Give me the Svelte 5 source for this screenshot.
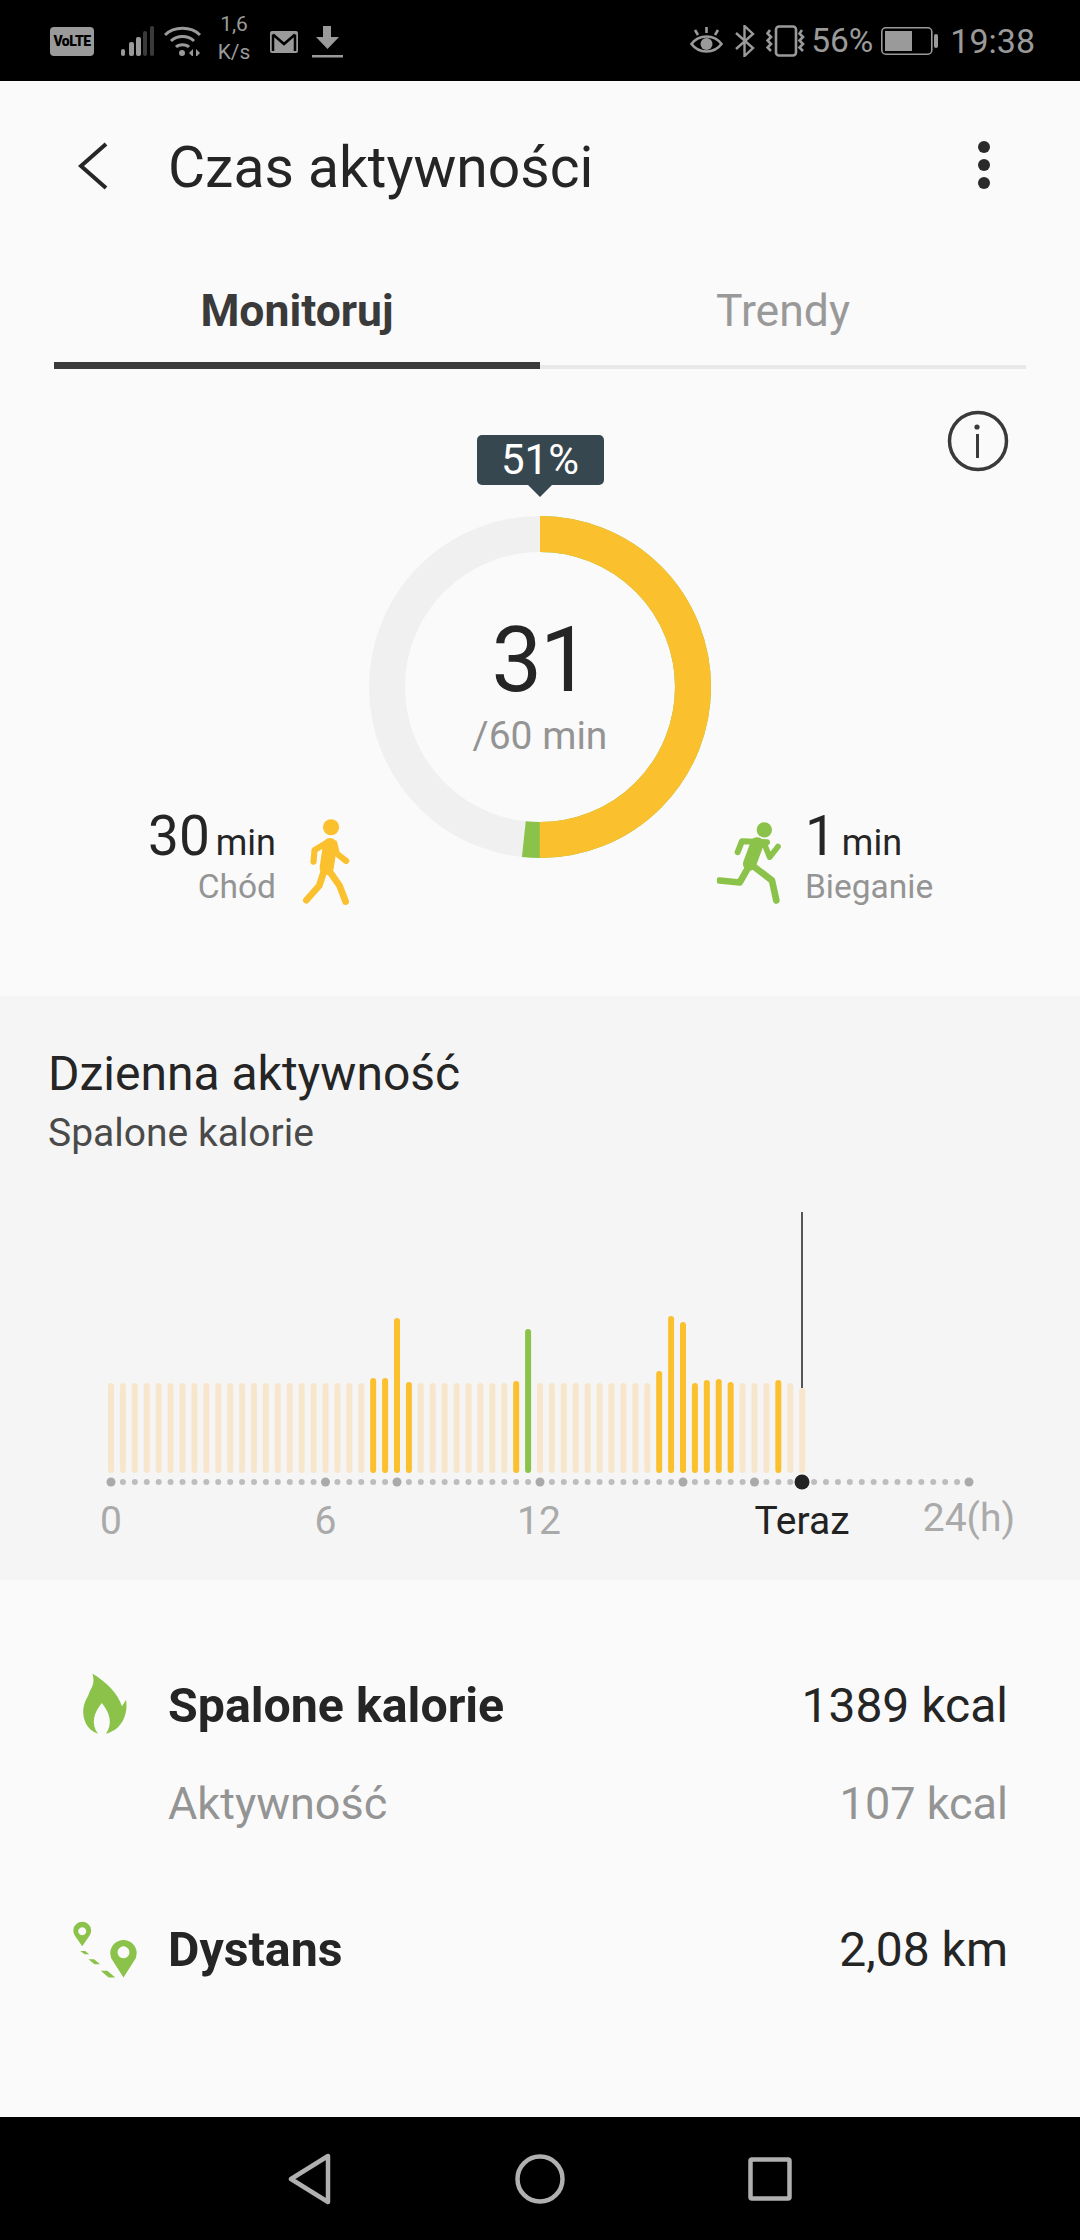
<script lang="ts">
	const activeBars: Record<number, { top: number; color?: string }> = {
		22: { top: 1378 },
		23: { top: 1378 },
		24: { top: 1318 },
		25: { top: 1382 },
		34: { top: 1381 },
		35: { top: 1329, color: '#8bc34a' },
		46: { top: 1371 },
		47: { top: 1316 },
		48: { top: 1322 },
		49: { top: 1383 },
		50: { top: 1380 },
		51: { top: 1379 },
		52: { top: 1382 },
		56: { top: 1380 }
	};

	const step = 858 / 72;
	const baseY = 1473;

	const bars = Array.from({ length: 59 }, (_, i) => {
		const active = activeBars[i];
		const top = active ? active.top : i === 58 ? 1388 : 1383;
		return {
			x: 111 + i * step,
			top,
			height: baseY - top,
			color: active ? active.color ?? '#fbc02d' : '#f8e6cc'
		};
	});

	const dots = Array.from({ length: 73 }, (_, i) => ({
		x: 111 + i * step,
		big: i % 24 === 0 || i % 18 === 0
	}));

	const ticks = [
		{ x: 111, label: '0' },
		{ x: 325.5, label: '6' },
		{ x: 539, label: '12' }
	];

	// ring: radius 153, yellow half plus 6 degrees of green
	const circumference = 2 * Math.PI * 153;
</script>

<div class="phone">
	<div class="status">
		<div class="status-left">
			<span class="volte">VoLTE</span>
			<svg class="signal" width="33" height="30" viewBox="0 0 33 30">
				<rect x="0" y="23" width="4" height="7" rx="2" fill="#9a9a9a" />
				<rect x="8" y="16" width="5" height="14" rx="2" fill="#9a9a9a" />
				<rect x="15" y="11" width="5" height="19" rx="2" fill="#9a9a9a" />
				<rect x="22" y="5" width="4" height="25" rx="2" fill="#3a3a3a" />
				<rect x="29" y="0" width="4" height="30" rx="2" fill="#3a3a3a" />
			</svg>
			<svg class="wifi" width="37" height="30" viewBox="0 0 37 30" fill="none" stroke="#9a9a9a" stroke-width="3">
				<path d="M1 9C10 0 27 0 36 9" />
				<path d="M7 15C13 9 24 9 30 15" />
				<path d="M12 21C15 18 22 18 25 21" />
				<circle cx="18" cy="27" r="3" fill="#9a9a9a" stroke="none" />
				<path d="M29 23l-4 4 4 4zM32 23l4 4-4 4z" fill="#9a9a9a" stroke="none" />
			</svg>
			<div class="speed">
				<span>1,6</span>
				<span>K/s</span>
			</div>
			<svg class="gmail" width="28" height="22" viewBox="0 0 28 22">
				<rect width="28" height="22" rx="2" fill="#9a9a9a" />
				<path d="M3 3.5V20M3 3.5L14 13L25 3.5M25 3.5V20" fill="none" stroke="#000" stroke-width="2.5" />
			</svg>
			<svg class="download" width="31" height="32" viewBox="0 0 31 32">
				<path d="M11 0H19V11H27L15.5 23L4 11H11Z" fill="#9a9a9a" />
				<rect y="29" width="31" height="2.5" fill="#9a9a9a" />
			</svg>
		</div>
		<div class="status-right">
			<svg class="eye" width="33" height="30" viewBox="0 0 33 30" fill="none" stroke="#9a9a9a" stroke-width="2.6">
				<path d="M1.5 18C9 8 24 8 31.5 18C24 28 9 28 1.5 18Z" />
				<circle cx="16.5" cy="18" r="6" fill="#9a9a9a" stroke="none" />
				<path d="M16.5 1V7M5 4L8 9M28 4L25 9" />
			</svg>
			<svg class="bluetooth" width="20" height="32" viewBox="0 0 20 32" fill="none" stroke="#9a9a9a" stroke-width="2.4">
				<path d="M1 8L18 23L9.5 31V1L18 9L1 24" />
			</svg>
			<svg class="vibrate" width="40" height="32" viewBox="0 0 40 32" fill="none" stroke="#9a9a9a" stroke-width="2.6">
				<rect x="10" y="1.5" width="20" height="29" rx="3" />
				<path d="M4 5L1.5 8.5L5 12L1.5 15.5L5 19L1.5 22.5L5 26" />
				<path d="M36 5L33.500 8.500L37 12L33.500 15.500L37 19L33.500 22.500L37 26" />
			</svg>
			<span class="pct">56%</span>
			<svg class="battery" width="57" height="28" viewBox="0 0 57 28">
				<rect x="0.8" y="0.8" width="50" height="26.400" rx="4" fill="none" stroke="#9a9a9a" stroke-width="1.600" />
				<rect x="4" y="4" width="27" height="20" fill="#9a9a9a" />
				<rect x="53" y="7" width="4" height="14" rx="2" fill="#9a9a9a" />
			</svg>
			<span class="clock">19:38</span>
		</div>
	</div>

	<header class="appbar">
		<svg class="back" width="30" height="48" viewBox="0 0 30 48" fill="none" stroke="#262626" stroke-width="4">
			<polyline points="28,2 3,24 28,46" />
		</svg>
		<h1>Czas aktywności</h1>
		<div class="menu">
			<i></i><i></i><i></i>
		</div>
	</header>

	<nav class="tabs">
		<div class="tab active">Monitoruj</div>
		<div class="tab">Trendy</div>
	</nav>

	<section class="summary">
		<svg class="info" width="62" height="62" viewBox="0 0 62 62" fill="none" stroke="#3a3a3a" stroke-width="3.500">
			<circle cx="31" cy="31" r="28.500" />
			<circle cx="30" cy="17" r="2.600" fill="#3a3a3a" stroke="none" />
			<path d="M30.500 24V48" stroke-width="3" />
		</svg>

		<div class="tooltip">51%</div>

		<div class="ring-row">
			<div class="stat stat-left">
				<div class="stat-text">
					<div class="stat-value"><b>30</b> min</div>
					<div class="stat-label">Chód</div>
				</div>
				<svg width="54" height="92" viewBox="540 1240 160 270" fill="none" stroke="#fbc02d" stroke-linecap="round" stroke-linejoin="round">
					<circle cx="635" cy="1272" r="24" fill="#fbc02d" stroke="none" />
					<path d="M632 1325L622 1392" stroke-width="42" />
					<path d="M622 1318L586 1340L583 1374" stroke-width="18" />
					<path d="M645 1320L652 1350L680 1372" stroke-width="18" />
					<path d="M618 1390L600 1445L562 1488" stroke-width="20" />
					<path d="M625 1395L660 1445L678 1492" stroke-width="20" />
				</svg>
			</div>

			<div class="ring">
				<svg width="342" height="342" viewBox="0 0 342 342" fill="none" stroke-width="36">
					<circle cx="171" cy="171" r="153" stroke="#f0f0f0" />
					<circle
						cx="171"
						cy="171"
						r="153"
						stroke="#8bc34a"
						stroke-dasharray="{circumference * (186 / 360)} {circumference}"
						transform="rotate(-90 171 171)"
					/>
					<circle
						cx="171"
						cy="171"
						r="153"
						stroke="#fbc02d"
						stroke-dasharray="{circumference / 2} {circumference}"
						transform="rotate(-90 171 171)"
					/>
				</svg>
				<div class="ring-text">
					<div class="ring-num">31</div>
					<div class="ring-goal">/60 min</div>
				</div>
			</div>

			<div class="stat stat-right">
				<svg width="64" height="90" viewBox="530 1245 192 265" fill="none" stroke="#8bc34a" stroke-linecap="round" stroke-linejoin="round">
					<circle cx="672" cy="1278" r="23" fill="#8bc34a" stroke="none" />
					<path d="M680 1315L605 1312L592 1345" stroke-width="18" />
					<path d="M650 1320L628 1380" stroke-width="40" />
					<path d="M672 1320L688 1360L713 1328" stroke-width="17" />
					<path d="M630 1380L598 1436L538 1430" stroke-width="20" />
					<path d="M630 1380L695 1430L708 1490" stroke-width="20" />
				</svg>
				<div class="stat-text">
					<div class="stat-value"><b>1</b> min</div>
					<div class="stat-label">Bieganie</div>
				</div>
			</div>
		</div>
	</section>

	<section class="daily">
		<h2>Dzienna aktywność</h2>
		<p>Spalone kalorie</p>
		<svg class="chart" width="1080" height="380" viewBox="0 1200 1080 380">
			{#each bars as bar}
				<rect x={bar.x - 3} y={bar.top} width="6" height={bar.height} rx="3" fill={bar.color} />
			{/each}
			{#each dots as dot}
				<circle cx={dot.x} cy="1482" r={dot.big ? 4.5 : 3} fill={dot.big ? '#aaaaaa' : '#bdbdbd'} />
			{/each}
			<rect x="801" y="1212" width="2" height="176" fill="#555555" />
			<circle cx="802" cy="1482" r="7.500" fill="#222222" />
			{#each ticks as tick}
				<text class="tick" x={tick.x} y="1534" text-anchor="middle">{tick.label}</text>
			{/each}
			<text class="tick now" x="802" y="1534" text-anchor="middle">Teraz</text>
			<text class="tick" x="1015" y="1531" text-anchor="end">24(h)</text>
		</svg>
	</section>

	<section class="totals">
		<div class="row">
			<svg class="row-icon" width="48" height="66" viewBox="90 60 150 200">
				<path
					d="M125 68C170 95 205 130 218 170L231 150C238 200 215 245 168 256C190 225 180 190 155 160C130 190 120 225 143 256C105 245 90 200 100 165C103 152 110 142 112 138L118 122C130 105 132 85 125 68Z"
					fill="#8bc34a"
				/>
			</svg>
			<span class="row-name">Spalone kalorie</span>
			<span class="row-value">1389 kcal</span>
		</div>
		<div class="row sub">
			<span class="row-name">Aktywność</span>
			<span class="row-value">107 kcal</span>
		</div>
		<div class="row last">
			<svg class="row-icon" width="66" height="60" viewBox="65 805 200 180">
				<path fill="#8bc34a" fill-rule="evenodd" d="M96 884L74 852A27 27 0 1 1 118 852ZM96 826a12 12 0 1 0 .01 0Z" />
				<path fill="#8bc34a" fill-rule="evenodd" d="M221 978L190 930A40 40 0 1 1 252 930ZM221 884a18 18 0 1 0 .01 0Z" />
				<path fill="#8bc34a" d="M90 898H105L117 908H103ZM115 923H132L150 938H133ZM152 958H172L196 978H176Z" />
			</svg>
			<span class="row-name">Dystans</span>
			<span class="row-value">2,08 km</span>
		</div>
	</section>

	<footer class="navbar">
		<svg width="44" height="52" viewBox="0 0 44 52" fill="none" stroke="#b0b0b0" stroke-width="4.500" stroke-linejoin="round">
			<path d="M3 26L40 3V49Z" />
		</svg>
		<svg width="50" height="50" viewBox="0 0 50 50" fill="none" stroke="#b0b0b0" stroke-width="4.500">
			<circle cx="25" cy="25" r="22.500" />
		</svg>
		<svg width="44" height="44" viewBox="0 0 44 44" fill="none" stroke="#b0b0b0" stroke-width="4.500" stroke-linejoin="round">
			<rect x="2.500" y="2.500" width="39" height="39" rx="1.500" />
		</svg>
	</footer>
</div>

<style>
	:global(body) {
		margin: 0;
		background: #fafafa;
	}

	.phone {
		width: 1080px;
		height: 2240px;
		display: flex;
		flex-direction: column;
		background: #fafafa;
		font-family: Roboto, "Liberation Sans", sans-serif;
		color: #252525;
		overflow: hidden;
	}

	.status {
		height: 81px;
		flex: none;
		display: flex;
		align-items: center;
		justify-content: space-between;
		background: #000;
		color: #9a9a9a;
		padding: 0 45px 0 50px;
	}

	.status-left,
	.status-right {
		display: flex;
		align-items: center;
	}

	.volte {
		width: 44px;
		height: 29px;
		background: #9a9a9a;
		border-radius: 4px;
		color: #000;
		font-size: 14px;
		font-weight: 900;
		letter-spacing: -0.5px;
		text-align: center;
		line-height: 29px;
		margin-top: 1px;
	}

	.signal {
		margin-left: 27px;
	}

	.wifi {
		margin-left: 10px;
	}

	.speed {
		display: flex;
		flex-direction: column;
		align-items: center;
		width: 36px;
		margin-left: 15px;
		font-size: 21px;
		line-height: 28px;
		margin-top: -5px;
	}

	.gmail {
		margin-left: 18px;
		margin-top: 2px;
	}

	.download {
		margin-left: 14px;
		margin-top: 2px;
	}

	.bluetooth {
		margin-left: 12px;
	}

	.vibrate {
		margin-left: 11px;
	}

	.pct {
		font-size: 33.5px;
		margin-left: 5px;
	}

	.battery {
		margin-left: 8px;
	}

	.clock {
		font-size: 34px;
		margin-left: 12px;
	}

	.appbar {
		height: 174px;
		flex: none;
		display: flex;
		align-items: center;
		padding: 0 0 0 78px;
	}

	.back {
		margin-top: -4px;
	}

	.appbar h1 {
		margin: -2px 0 0 60px;
		font-size: 57px;
		font-weight: 400;
	}

	.menu {
		margin-left: auto;
		margin-right: 90px;
		display: flex;
		flex-direction: column;
		gap: 6px;
		margin-top: -6px;
	}

	.menu i {
		display: block;
		width: 12px;
		height: 12px;
		border-radius: 50%;
		background: #2a2a2a;
	}

	.tabs {
		display: flex;
		margin: 0 54px;
		height: 114px;
		flex: none;
	}

	.tab {
		flex: 1;
		box-sizing: border-box;
		text-align: center;
		padding-top: 30px;
		line-height: 52px;
		font-size: 44.5px;
		color: #999;
		border-bottom: 4px solid #e8e8e8;
	}

	.tab.active {
		color: #3a3a3a;
		font-weight: 700;
		border-bottom: 7px solid #3a3a3a;
	}

	.summary {
		height: 627px;
		flex: none;
		position: relative;
		display: flex;
		flex-direction: column;
		align-items: center;
		padding-top: 66px;
		box-sizing: border-box;
	}

	.info {
		position: absolute;
		top: 41px;
		right: 71px;
	}

	.tooltip {
		position: relative;
		width: 127px;
		height: 50px;
		background: #37474f;
		border-radius: 5px;
		color: #fff;
		font-size: 42px;
		line-height: 50px;
		text-align: center;
	}

	.tooltip::after {
		content: '';
		position: absolute;
		left: 50%;
		bottom: -12px;
		margin-left: -12px;
		border-left: 12px solid transparent;
		border-right: 12px solid transparent;
		border-top: 12px solid #37474f;
	}

	.ring-row {
		display: grid;
		grid-template-columns: 1fr 342px 1fr;
		width: 100%;
		margin-top: 31px;
	}

	.ring {
		position: relative;
		width: 342px;
		height: 342px;
	}

	.ring svg {
		display: block;
	}

	.ring-text {
		position: absolute;
		inset: 0;
		display: flex;
		flex-direction: column;
		align-items: center;
		justify-content: center;
	}

	.ring-num {
		font-size: 90px;
		line-height: 96px;
		margin-top: -4px;
		letter-spacing: -2px;
	}

	.ring-goal {
		font-size: 39px;
		color: #949494;
		line-height: 44px;
		margin-top: 5px;
	}

	.stat {
		display: flex;
		align-items: flex-end;
		margin-bottom: -50px;
		align-self: end;
	}

	.stat-left {
		justify-content: flex-end;
		padding-right: 16px;
		gap: 23px;
	}

	.stat-right {
		padding-left: 6px;
		gap: 24px;
	}

	.stat-left .stat-text {
		text-align: right;
	}

	.stat-value {
		font-size: 36px;
		line-height: 60px;
		margin-bottom: -5px;
		word-spacing: -3px;
	}

	.stat-value b {
		font-size: 55px;
		font-weight: 400;
	}

	.stat-label {
		font-size: 33.5px;
		color: #949494;
		line-height: 38px;
		margin-bottom: 2px;
	}

	.daily {
		height: 584px;
		flex: none;
		background: #f5f5f5;
		box-sizing: border-box;
		padding-top: 49px;
		position: relative;
	}

	.daily h2 {
		margin: 0 0 0 48px;
		font-size: 48px;
		font-weight: 400;
		line-height: 58px;
	}

	.daily p {
		margin: 6px 0 0 48px;
		font-size: 39px;
		line-height: 48px;
		color: #4a4a4a;
	}

	.chart {
		position: absolute;
		left: 0;
		top: 204px;
	}

	.tick {
		font-size: 39px;
		fill: #aaaaaa;
	}

	.tick.now {
		fill: #222222;
	}

	.totals {
		flex: 1;
		padding: 77px 72px 0 0;
	}

	.row {
		display: flex;
		align-items: center;
		height: 96px;
		position: relative;
		padding-left: 168px;
	}

	.row.sub {
		margin-top: 2px;
	}

	.row.last {
		margin-top: 50px;
	}

	.row-icon {
		position: absolute;
		left: 81px;
		top: 50%;
		transform: translateY(-50%);
		margin-top: -2px;
	}

	.row.last .row-icon {
		left: 72px;
		margin-top: 1px;
	}

	.row-name {
		font-size: 48.3px;
		font-weight: 700;
	}

	.row-value {
		margin-left: auto;
		font-size: 48px;
	}

	.row.sub .row-name,
	.row.sub .row-value {
		font-size: 45px;
		font-weight: 400;
		color: #949494;
	}

	.navbar {
		height: 123px;
		flex: none;
		background: #000;
		display: flex;
		align-items: center;
		justify-content: center;
		gap: 183px;
	}
</style>
